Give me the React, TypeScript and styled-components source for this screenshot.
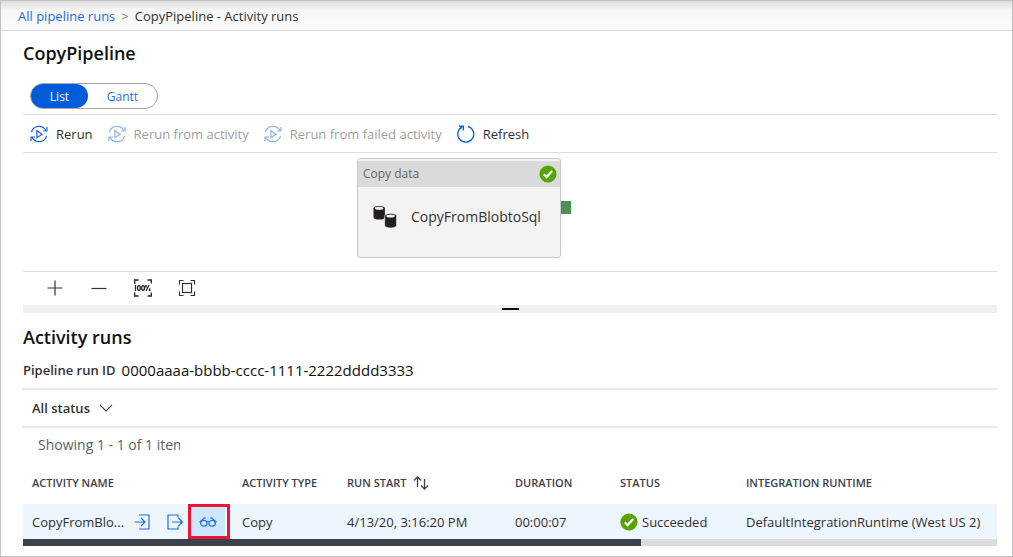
import React from "react";
import styled, { createGlobalStyle } from "styled-components";

const GlobalStyle = createGlobalStyle`
  *, *::before, *::after { box-sizing: border-box; }
  body {
    margin: 0;
    background: #fff;
    color: #323130;
    font-family: "Open Sans", "Noto Sans", sans-serif;
    font-size: 13px;
    line-height: 20px;
  }
  button, select { font: inherit; color: inherit; }
`;

const Page = styled.div`
  display: flex;
  flex-direction: column;
  min-height: 100vh;
  border: 1px solid #c1c1c1;
`;

const TopBar = styled.nav`
  display: flex;
  align-items: center;
  gap: 6px;
  height: 30px;
  padding: 0 17px;
  border-bottom: 1px solid #d6d6d6;
  background: linear-gradient(#dcdcdc, #f6f6f6 9px, #fcfcfc);
`;

const Crumb = styled.a`
  color: #1f6fde;
  text-decoration: none;
`;

const Separator = styled.span`
  color: #777;
`;

const Content = styled.main`
  display: flex;
  flex-direction: column;
  padding: 0 15px 10px 22px;
`;

const Heading = styled.h1`
  margin: 0;
  padding: 9px 0 0;
  color: #111;
  font-size: 18px;
  line-height: 26px;
  font-weight: 600;
`;

const SubHeading = styled(Heading).attrs({ as: "h2" })`
  padding-top: 11px;
`;

const ViewSwitch = styled.div`
  display: flex;
  align-self: flex-start;
  width: 128px;
  height: 26px;
  margin: 17px 0 5px 7px;
  border: 1px solid #a6a6a6;
  border-radius: 13px;
`;

const ViewOption = styled.button<{ $active?: boolean }>`
  flex: ${(p) => (p.$active ? "0 0 57px" : "1")};
  padding: 2px 0 0;
  border: 0;
  border-radius: 12px;
  background: ${(p) => (p.$active ? "#015cda" : "transparent")};
  color: ${(p) => (p.$active ? "#fff" : "#1f6fde")};
  font-size: 12px;
`;

const Toolbar = styled.div`
  display: flex;
  align-items: center;
  gap: 15px;
  height: 39px;
  padding-left: 7px;
  border-top: 1px solid #dcdcdc;
  border-bottom: 1px solid #dcdcdc;
`;

const ToolButton = styled.button`
  display: flex;
  align-items: center;
  gap: 8px;
  padding: 0;
  border: 0;
  background: none;
  white-space: nowrap;
  svg { color: #1567dc; }
  &:disabled { color: #a0a0a0; }
  &:disabled svg { color: #8bb3ec; }
`;

const Canvas = styled.section`
  position: relative;
  height: 118px;
`;

const Node = styled.article`
  position: absolute;
  left: 334px;
  top: 5px;
  width: 204px;
  height: 100px;
  padding-top: 2px;
  border: 1px solid #c8c8c8;
  border-radius: 3px;
  background: #f3f3f3;
`;

const NodeHeader = styled.header`
  display: flex;
  align-items: center;
  justify-content: space-between;
  height: 26px;
  padding: 0 3px 0 5px;
  background: #dadada;
  color: #666;
  font-size: 12px;
`;

const NodeBody = styled.div`
  display: flex;
  align-items: center;
  gap: 14px;
  height: 60px;
  padding-left: 15px;
  font-size: 14px;
`;

const NodePort = styled.span`
  position: absolute;
  left: 203px;
  top: 42px;
  width: 10px;
  height: 13px;
  background: #4a9153;
`;

const ZoomBar = styled.div`
  display: flex;
  align-items: center;
  gap: 24px;
  height: 34px;
  padding: 0 0 2px 22px;
  border-top: 1px solid #dcdcdc;
`;

const IconButton = styled.button`
  display: grid;
  place-items: center;
  width: 20px;
  height: 20px;
  padding: 0;
  border: 0;
  background: none;
`;

const Splitter = styled.div`
  display: grid;
  place-items: center;
  height: 8px;
  background: #f1f1f1;
  &::after {
    content: "";
    width: 17px;
    height: 2px;
    background: #111;
  }
`;

const RunId = styled.p`
  display: flex;
  gap: 6px;
  margin: 0;
  padding: 10px 0 8px;
  border-bottom: 2px solid #e8e8e8;
  strong { font-weight: 600; }
`;

const RunIdValue = styled.span`
  color: #111;
  font-size: 15px;
`;

const FilterBar = styled.div`
  display: flex;
  align-items: center;
  height: 38px;
  padding-left: 9px;
  border-bottom: 2px solid #e8e8e8;
`;

const SelectBox = styled.label`
  display: flex;
  align-items: center;
  svg { margin-left: -15px; pointer-events: none; }
`;

const StatusSelect = styled.select`
  appearance: none;
  width: 82px;
  padding: 0;
  border: 0;
  background: none;
  font-weight: 600;
`;

const Count = styled.p`
  width: 142px;
  margin: 0 0 0 15px;
  padding: 7px 0 6px;
  overflow: hidden;
  white-space: nowrap;
  color: #5a5f66;
  font-size: 14px;
`;

const Table = styled.table`
  width: 100%;
  table-layout: fixed;
  border-collapse: collapse;
`;

const HeadCell = styled.th<{ $width?: number }>`
  width: ${(p) => (p.$width ? `${p.$width}px` : "auto")};
  height: 43px;
  padding: 0 0 0 9px;
  color: #3b424c;
  font-size: 11px;
  font-weight: 600;
  text-align: left;
  white-space: nowrap;
`;

const Cell = styled.td`
  height: 35px;
  padding: 0 0 0 9px;
  background: #edf5fe;
  white-space: nowrap;
`;

const Inline = styled.span<{ $gap: number }>`
  display: flex;
  align-items: center;
  gap: ${(p) => p.$gap}px;
`;

const Name = styled.span`
  width: 93px;
  white-space: nowrap;
`;

const RowAction = styled.button<{ $hover?: boolean }>`
  display: grid;
  place-items: center;
  position: relative;
  width: ${(p) => (p.$hover ? 34 : 33)}px;
  height: 35px;
  padding: 0;
  border: 0;
  background: ${(p) => (p.$hover ? "#cde7ff" : "none")};
  color: #1f6fde;
`;

const Callout = styled.span`
  position: absolute;
  inset: 0 -5px 0 -3px;
  border: 3px solid #ec1438;
`;

const ScrollTrack = styled.div`
  height: 7px;
  background: #dcdcdc;
`;

const ScrollThumb = styled.div`
  width: calc(100% * 619 / 975);
  height: 100%;
  background: #3c424c;
`;

const RerunIcon = () => (
  <svg width="18" height="18" viewBox="0 0 18 18" fill="none" stroke="currentColor" strokeWidth="1.2">
    <path d="M1.4 7.2A7.8 7.8 0 0 1 15.800 5.400M17 2V6H13" />
    <path d="M16.600 10.800A7.800 7.800 0 0 1 2.200 12.600M1 16V12H5" />
    <path d="M6.900 5.700v7L12.200 9.200z" />
  </svg>
);

const RefreshIcon = () => (
  <svg width="18" height="18" viewBox="0 0 18 18" fill="none" stroke="currentColor" strokeWidth="1.4">
    <path d="M11 1.5A8 8 0 1 1 5.2 2M2 1.3H6.3V5.5" />
  </svg>
);

const SuccessIcon = () => (
  <svg width="18" height="18" viewBox="0 0 18 18" role="img" aria-label="Succeeded">
    <circle cx="9" cy="9" r="8.6" fill="#57a300" />
    <path d="M4.8 9.2l2.9 2.9 5.4-6" fill="none" stroke="#fff" strokeWidth="2.2" />
  </svg>
);

const CopyDataIcon = () => (
  <svg width="24" height="24" viewBox="0 0 24 24" fill="#231f20">
    <path d="M.5 3.2v9c0 1.4 2.6 2.3 5.7 2.3s5.7-.9 5.7-2.3v-9C11.9 1.8 9.3.9 6.2.9S.5 1.8.5 3.2z" />
    <ellipse cx="6.2" cy="3.3" rx="4.2" ry="1.5" fill="#f3f3f3" />
    <path d="M11.7 11v9.4c0 1.4 2.6 2.5 5.9 2.5s5.9-1.1 5.9-2.5V11c0-1.4-2.6-2.5-5.9-2.5S11.7 9.6 11.700 11z" stroke="#f3f3f3" strokeWidth=".6" />
    <ellipse cx="17.6" cy="11" rx="4.2" ry="1.5" fill="#f3f3f3" />
  </svg>
);

const PlusIcon = () => (
  <svg width="16" height="16" viewBox="0 0 16 16" stroke="#333" strokeWidth="1.2"><path d="M8 .5v15M.5 8h15" /></svg>
);
const MinusIcon = () => (
  <svg width="16" height="16" viewBox="0 0 16 16" stroke="#333" strokeWidth="1.2"><path d="M.5 8.5h15" /></svg>
);
const ActualSizeIcon = () => (
  <svg width="18" height="18" viewBox="0 0 18 18" fill="none" stroke="#222" strokeWidth="1.3">
    <path d="M.7 5V1H4.5M13.5 1H17.3V4.5M17.3 13.5V17H13.5M4.5 17H.7V13.5" />
    <path d="M1.5 6v6M12 12l3-6" strokeWidth="1.2" />
    <ellipse cx="4.9" cy="9" rx="1.4" ry="2.4" />
    <ellipse cx="9.1" cy="9" rx="1.4" ry="2.4" />
    <path d="M12 6v2.5M15.6 9.5V12" strokeWidth="1.6" />
  </svg>
);
const FitIcon = () => (
  <svg width="18" height="18" viewBox="0 0 18 18" fill="none" stroke="#333" strokeWidth="1.2">
    <path d="M1.500 5.500V1.500H5.500M12.500 1.500H16.500V5.500M16.500 12.500V16.500H12.500M5.500 16.500H1.500V12.500" />
    <rect x="4.5" y="4.5" width="9" height="9" />
  </svg>
);
const ChevronIcon = () => (
  <svg width="14" height="8" viewBox="0 0 14 8" fill="none" stroke="#444" strokeWidth="1.1"><path d="M1 1l6 6 6-6" /></svg>
);
const SortIcon = () => (
  <svg width="16" height="14" viewBox="0 0 16 14" fill="none" stroke="#3b424c" strokeWidth="1.3">
    <path d="M4.5 11V1M1 4.5L4.5 1 8 4.5M11.5 3v10M8 9.5l3.5 3.5L15 9.5" />
  </svg>
);
const InputIcon = () => (
  <svg width="16" height="16" viewBox="0 0 16 16" fill="none" stroke="currentColor" strokeWidth="1.2">
    <path d="M5 1H15V15H5M.5 8H11M7 4L11 8 7 12" />
  </svg>
);
const OutputIcon = () => (
  <svg width="16" height="16" viewBox="0 0 16 16" fill="none" stroke="currentColor" strokeWidth="1.2">
    <path d="M11 3.5V1H1V15H11V12.5M5 8H15.3M11.5 4L15.3 8 11.5 12" />
  </svg>
);
const GlassesIcon = () => (
  <svg width="18" height="12" viewBox="0 0 18 12" fill="none" stroke="currentColor" strokeWidth="1.2">
    <ellipse cx="4.900" cy="7.300" rx="3.200" ry="2.900" />
    <ellipse cx="13.100" cy="7.300" rx="3.200" ry="2.900" />
    <path d="M7.700 6Q9 5 10.300 6M.4 5.600H2.400M15.600 5.600H17.600M1.500 5.500L5.200 2H7M16.500 5.500L12.800 2H11" />
  </svg>
);

export default function App() {
  return (
    <>
      <GlobalStyle />
      <Page>
        <TopBar aria-label="Breadcrumb">
          <Crumb href="#runs">All pipeline runs</Crumb>
          <Separator>&gt;</Separator>
          <span>CopyPipeline - Activity runs</span>
        </TopBar>
        <Content>
          <Heading>CopyPipeline</Heading>
          <ViewSwitch>
            <ViewOption $active>List</ViewOption>
            <ViewOption>Gantt</ViewOption>
          </ViewSwitch>
          <Toolbar>
            <ToolButton><RerunIcon />Rerun</ToolButton>
            <ToolButton disabled><RerunIcon />Rerun from activity</ToolButton>
            <ToolButton disabled><RerunIcon />Rerun from failed activity</ToolButton>
            <ToolButton><RefreshIcon />Refresh</ToolButton>
          </Toolbar>
          <Canvas>
            <Node>
              <NodeHeader>Copy data<SuccessIcon /></NodeHeader>
              <NodeBody><CopyDataIcon />CopyFromBlobtoSql</NodeBody>
              <NodePort />
            </Node>
          </Canvas>
          <ZoomBar>
            <IconButton aria-label="Zoom in"><PlusIcon /></IconButton>
            <IconButton aria-label="Zoom out"><MinusIcon /></IconButton>
            <IconButton aria-label="Zoom to 100%"><ActualSizeIcon /></IconButton>
            <IconButton aria-label="Zoom to fit"><FitIcon /></IconButton>
          </ZoomBar>
          <Splitter />
          <SubHeading>Activity runs</SubHeading>
          <RunId>
            <strong>Pipeline run ID</strong>
            <RunIdValue>0000aaaa-bbbb-cccc-1111-2222dddd3333</RunIdValue>
          </RunId>
          <FilterBar>
            <SelectBox>
              <StatusSelect aria-label="Status filter"><option>All status</option></StatusSelect>
              <ChevronIcon />
            </SelectBox>
          </FilterBar>
          <Count>Showing 1 - 1 of 1 items</Count>
          <Table>
            <thead>
              <tr>
                <HeadCell $width={210}>ACTIVITY NAME</HeadCell>
                <HeadCell $width={105}>ACTIVITY TYPE</HeadCell>
                <HeadCell $width={168}><Inline $gap={7}>RUN START<SortIcon /></Inline></HeadCell>
                <HeadCell $width={105}>DURATION</HeadCell>
                <HeadCell $width={126}>STATUS</HeadCell>
                <HeadCell>INTEGRATION RUNTIME</HeadCell>
              </tr>
            </thead>
            <tbody>
              <tr>
                <Cell>
                  <Inline $gap={0}>
                    <Name>CopyFromBlo...</Name>
                    <RowAction aria-label="Input"><InputIcon /></RowAction>
                    <RowAction aria-label="Output"><OutputIcon /></RowAction>
                    <RowAction aria-label="Details" $hover><GlassesIcon /><Callout /></RowAction>
                  </Inline>
                </Cell>
                <Cell>Copy</Cell>
                <Cell>4/13/20, 3:16:20 PM</Cell>
                <Cell>00:00:07</Cell>
                <Cell><Inline $gap={4}><SuccessIcon />Succeeded</Inline></Cell>
                <Cell>DefaultIntegrationRuntime (West US 2)</Cell>
              </tr>
            </tbody>
          </Table>
          <ScrollTrack><ScrollThumb /></ScrollTrack>
        </Content>
      </Page>
    </>
  );
}
